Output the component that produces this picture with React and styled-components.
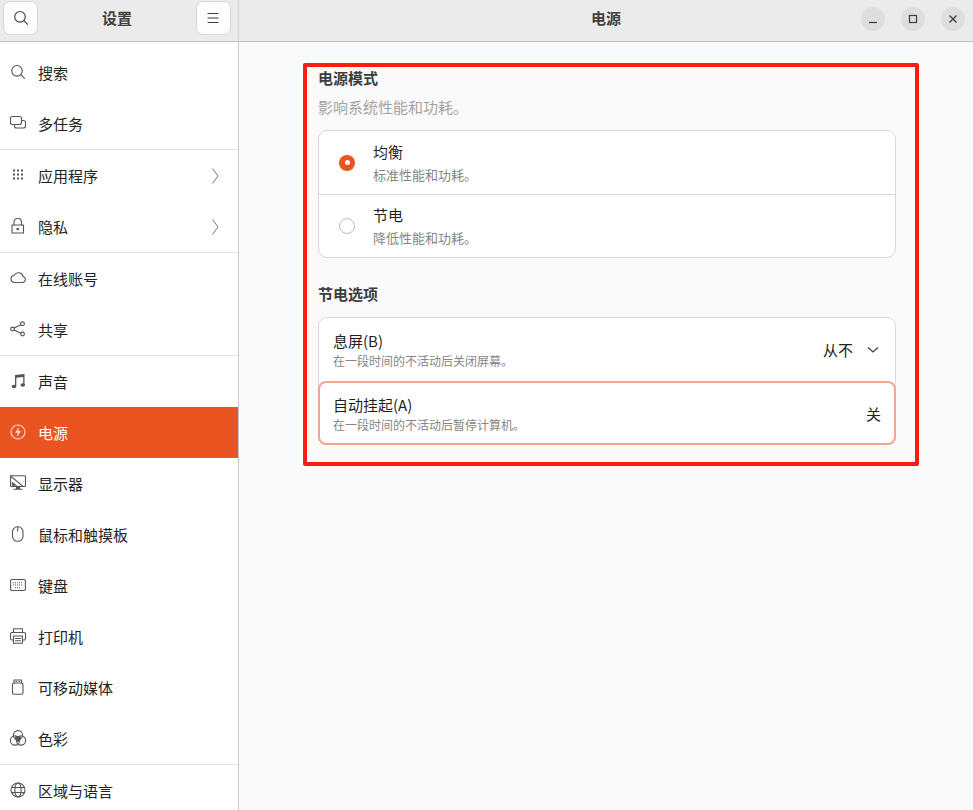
import React from 'react';
import styled, { createGlobalStyle } from 'styled-components';

const GlobalStyle = createGlobalStyle`
  html, body {
    margin: 0;
    padding: 0;
    height: 100%;
    overflow: hidden;
    background: #fafafa;
  }
  body {
    font-family: "Noto Sans CJK SC", "Noto Sans", sans-serif;
    color: #222222;
  }
`;

const Window = styled.div`
  width: 973px;
  height: 810px;
  display: grid;
  grid-template-columns: 239px 1fr;
  grid-template-rows: 42px 1fr;
  overflow: hidden;
`;

const SideHeader = styled.header`
  display: flex;
  align-items: flex-start;
  justify-content: space-between;
  box-sizing: border-box;
  padding: 1px 7px 0 3px;
  background: #ebebeb;
  border-bottom: 1px solid #c2c2c2;
  border-right: 1px solid #d2d2d2;
`;

const MainHeader = styled.header`
  display: flex;
  align-items: flex-start;
  justify-content: flex-end;
  position: relative;
  box-sizing: border-box;
  padding: 7px 8px 0 0;
  gap: 16px;
  background: #ebebeb;
  border-bottom: 1px solid #c2c2c2;
`;

const HeaderTitle = styled.h1`
  margin: 0;
  font-size: 15px;
  line-height: 34px;
  font-weight: 700;
  color: #404040;
`;

const MainTitle = styled(HeaderTitle)`
  position: absolute;
  left: 0;
  right: 0;
  top: 1px;
  text-align: center;
`;

const ToolButton = styled.button`
  width: 35px;
  height: 34px;
  padding: 0;
  display: flex;
  align-items: center;
  justify-content: center;
  background: #fdfdfd;
  border: 1px solid #d6d6d6;
  border-radius: 7px;
  color: #3d3d3d;
`;

const WindowButton = styled.button`
  position: relative;
  width: 24px;
  height: 24px;
  padding: 0;
  display: flex;
  align-items: center;
  justify-content: center;
  background: #dedede;
  border: none;
  border-radius: 50%;
  color: #3d3d3d;
`;

const Sidebar = styled.nav`
  box-sizing: border-box;
  height: 768px;
  padding-top: 5px;
  background: #ffffff;
  border-right: 1px solid #c9c9c9;
  overflow: hidden;
`;

const NavRow = styled.div`
  height: 51px;
  display: flex;
  align-items: center;
  box-sizing: border-box;
  padding: 0 19px 0 10px;
  font-size: 15px;
  background: ${p => (p.$active ? '#e95420' : 'transparent')};
  color: ${p => (p.$active ? '#ffffff' : '#222222')};
`;

const NavIcon = styled.span`
  width: 16px;
  height: 16px;
  margin: -2px 12px 0 0;
  display: flex;
  color: ${p => (p.$active ? '#ffd9cb' : '#555555')};
`;

const NavLabel = styled.span`
  flex: 1;
`;

const Separator = styled.div`
  height: 1px;
  background: #e3e3e3;
`;

const Main = styled.main`
  height: 768px;
  box-sizing: border-box;
  padding: 21px 0 0 64px;
  background: #fafafa;
`;

const Highlight = styled.section`
  box-sizing: border-box;
  width: 616px;
  height: 403px;
  padding: 0 20px 0 11px;
  border: 4px solid #fe1c10;
  border-radius: 2px;
`;

const SectionTitle = styled.h2`
  margin: ${p => p.$top || 0}px 0 0;
  font-size: 15px;
  line-height: 22px;
  font-weight: 700;
  color: #3d3d3d;
`;

const SectionHint = styled.p`
  margin: 7px 0 12px;
  font-size: 15px;
  line-height: 22px;
  color: #a3a3a3;
`;

const Card = styled.div`
  width: 578px;
  box-sizing: border-box;
  margin-top: ${p => p.$top || 0}px;
  background: #ffffff;
  border: 1px solid #d9d9d9;
  border-radius: 9px;
`;

const RadioRow = styled.div`
  height: 63px;
  display: flex;
  align-items: center;
  box-sizing: border-box;
  padding: 0 0 0 20px;
  border-top: ${p => (p.$first ? 'none' : '1px solid #d9d9d9')};
`;

const Radio = styled.span`
  width: 16px;
  height: 16px;
  margin-right: 18px;
  flex: none;
  box-sizing: border-box;
  border-radius: 50%;
  display: flex;
  align-items: center;
  justify-content: center;
  background: ${p => (p.$on ? '#e95420' : '#ffffff')};
  border: ${p => (p.$on ? 'none' : '1px solid #bcbcbc')};

  &::after {
    content: '';
    display: ${p => (p.$on ? 'block' : 'none')};
    width: 5px;
    height: 5px;
    border-radius: 50%;
    background: #ffffff;
  }
`;

const RowText = styled.div`
  display: flex;
  flex-direction: column;
  flex: 1;
`;

const RowTitle = styled.span`
  font-size: 15px;
  line-height: 22px;
  color: #1f1f1f;
`;

const RadioHint = styled.span`
  margin-top: 1px;
  font-size: 13px;
  line-height: 21px;
  color: #858585;
`;

const OptionRow = styled.div`
  height: ${p => (p.$focused ? 64 : 63)}px;
  display: flex;
  align-items: center;
  box-sizing: border-box;
  padding: 0 ${p => (p.$focused ? 13 : 16)}px 0 ${p => (p.$focused ? 13 : 14)}px;
  margin: ${p => (p.$focused ? '0 -1px -1px' : 0)};
  border: ${p => (p.$focused ? '2px solid #f3a68e' : 'none')};
  border-radius: ${p => (p.$focused ? '8px' : 0)};
`;

const OptionHint = styled.span`
  font-size: 12px;
  line-height: 17px;
  color: #858585;
`;

const OptionValue = styled.span`
  font-size: 15px;
  color: #222222;
`;

const ValueChevron = styled.span`
  display: flex;
  margin-left: 14px;
  color: #3d3d3d;
`;

const Svg = ({ children, size = 16 }) => (
  <svg
    width={size}
    height={size}
    viewBox="0 0 16 16"
    fill="none"
    stroke="currentColor"
    strokeWidth="1.1"
    strokeLinecap="round"
    strokeLinejoin="round"
  >
    {children}
  </svg>
);

const SearchIcon = () => (
  <Svg>
    <circle cx="7" cy="6.800" r="5.300" />
    <path d="M10.900 10.700l3.600 3.600" />
  </Svg>
);

const MenuIcon = () => (
  <Svg>
    <path d="M3 3.500h10M3 8h10M3 12.500h10" />
  </Svg>
);

const MultitaskIcon = () => (
  <Svg>
    <rect x="0.500" y="1.500" width="11" height="8" rx="2" />
    <path d="M11.500 5.500h2a2 2 0 0 1 2 2v3.500a2 2 0 0 1-2 2h-7a2 2 0 0 1-2-2v-1.500" />
  </Svg>
);

const AppsIcon = () => (
  <svg width="16" height="16" viewBox="0 0 16 16" fill="currentColor">
    {[2.500, 6.500, 10.500].map(y =>
      [3, 7, 11].map(x => <rect key={`${x}-${y}`} x={x} y={y} width="2" height="2" />)
    )}
  </svg>
);

const LockIcon = () => (
  <Svg>
    <rect x="2" y="7" width="11.500" height="8" />
    <path d="M4 7V4a3.700 3.700 0 0 1 7.500 0v3" />
    <circle cx="7.700" cy="11" r="0.800" fill="currentColor" />
  </Svg>
);

const CloudIcon = () => (
  <Svg>
    <path d="M4 12.500h8.500a3 3 0 0 0 .6-5.900A4.800 4.800 0 0 0 4.200 5.200 3.700 3.700 0 0 0 4 12.500z" />
  </Svg>
);

const ShareIcon = () => (
  <Svg>
    <circle cx="2.500" cy="8" r="1.900" />
    <circle cx="12.500" cy="2.800" r="1.900" />
    <circle cx="12.500" cy="13" r="1.900" />
    <path d="M4.200 7.100l6.600-3.400M4.200 8.900l6.600 3.300" />
  </Svg>
);

const MusicIcon = () => (
  <svg width="16" height="16" viewBox="0 0 16 16" fill="currentColor">
    <path d="M5 2L14.500 1v11h-1.300V4L6.300 4.800V13.500H5z" />
    <ellipse cx="4" cy="13.500" rx="2.300" ry="1.800" />
    <ellipse cx="12.800" cy="12" rx="2.300" ry="1.800" />
  </svg>
);

const PowerIcon = () => (
  <Svg>
    <circle cx="8" cy="8" r="7" />
    <path d="M9.300 2.500L5 8.800h2.700L6.800 13.500 11 7H8.300z" fill="currentColor" stroke="none" />
  </Svg>
);

const DisplayIcon = () => (
  <Svg>
    <rect x="0.500" y="0.800" width="15" height="10.700" rx="1" />
    <path d="M0.500 1L13 11.300" />
    <path d="M1.800 6.500l5.500 4.300H1.800z" fill="currentColor" stroke="none" />
    <path d="M6 12h4v1.700h2.500v1.100h-9v-1.100H6z" fill="currentColor" stroke="none" />
  </Svg>
);

const MouseIcon = () => (
  <Svg>
    <rect x="2.500" y="0.800" width="10.500" height="14.500" rx="5" />
    <path d="M7.700 1v4" />
  </Svg>
);

const KeyboardIcon = () => (
  <Svg>
    <rect x="0.600" y="2.500" width="14.800" height="11" rx="1.500" />
    <path d="M3 5.700h10M3 8h10M5 10.700h6" strokeDasharray="1 1" strokeLinecap="butt" />
  </Svg>
);

const PrinterIcon = () => (
  <Svg>
    <path d="M3.500 4.500V0.800h9v3.700" />
    <path d="M3.500 12H2a1.500 1.500 0 0 1-1.500-1.500V6A1.500 1.500 0 0 1 2 4.500h12A1.500 1.500 0 0 1 15.500 6v4.500A1.500 1.500 0 0 1 14 12h-1.500" />
    <rect x="3.500" y="8" width="9" height="7.200" />
    <path d="M5.500 10.500h5M5.500 12.700h5" />
  </Svg>
);

const UsbIcon = () => (
  <Svg>
    <rect x="2.500" y="4" width="10.500" height="11.300" rx="1.500" />
    <path d="M4 4V1h7.500v3M6 2.500h.6M9 2.500h.6" />
  </Svg>
);

const ColorIcon = () => (
  <Svg>
    <circle cx="8" cy="5.200" r="4.600" />
    <circle cx="5" cy="10.500" r="4.600" />
    <circle cx="11" cy="10.500" r="4.600" />
    <path d="M5 7C6.500 5.500 9.500 5.500 11 7c.3 2-1 4.500-3 5-2-.5-3.300-3-3-5z" fill="currentColor" stroke="none" />
  </Svg>
);

const GlobeIcon = () => (
  <Svg>
    <circle cx="8" cy="8" r="7" />
    <ellipse cx="8" cy="8" rx="3.200" ry="7" />
    <path d="M1.500 5.500h13M1.500 10.500h13" />
  </Svg>
);

const ChevronRight = () => (
  <svg width="7" height="16" viewBox="0 0 7 16" fill="none" stroke="#777777" strokeWidth="1">
    <path d="M.5 .5L6 8 .5 15.500" />
  </svg>
);

const ChevronDown = () => (
  <svg width="12" height="8" viewBox="0 0 12 8" fill="none" stroke="currentColor" strokeWidth="1.200">
    <path d="M1 1.500l5 4.500 5-4.500" />
  </svg>
);

const navGroups = [
  [
    { label: '搜索', icon: SearchIcon },
    { label: '多任务', icon: MultitaskIcon },
  ],
  [
    { label: '应用程序', icon: AppsIcon, more: true },
    { label: '隐私', icon: LockIcon, more: true },
  ],
  [
    { label: '在线账号', icon: CloudIcon },
    { label: '共享', icon: ShareIcon },
  ],
  [
    { label: '声音', icon: MusicIcon },
    { label: '电源', icon: PowerIcon, active: true },
    { label: '显示器', icon: DisplayIcon },
    { label: '鼠标和触摸板', icon: MouseIcon },
    { label: '键盘', icon: KeyboardIcon },
    { label: '打印机', icon: PrinterIcon },
    { label: '可移动媒体', icon: UsbIcon },
    { label: '色彩', icon: ColorIcon },
  ],
  [{ label: '区域与语言', icon: GlobeIcon }],
];

export default function App() {
  return (
    <Window>
      <GlobalStyle />

      <SideHeader>
        <ToolButton><SearchIcon /></ToolButton>
        <HeaderTitle>设置</HeaderTitle>
        <ToolButton><MenuIcon /></ToolButton>
      </SideHeader>

      <MainHeader>
        <MainTitle>电源</MainTitle>
        <WindowButton>
          <svg width="10" height="10" viewBox="0 0 10 10" stroke="currentColor" strokeWidth="1.200">
            <path d="M1 8.500h8" />
          </svg>
        </WindowButton>
        <WindowButton>
          <svg width="10" height="10" viewBox="0 0 10 10" fill="none" stroke="currentColor" strokeWidth="1.200">
            <rect x="1.500" y="1.500" width="7" height="7" />
          </svg>
        </WindowButton>
        <WindowButton>
          <svg width="10" height="10" viewBox="0 0 10 10" stroke="currentColor" strokeWidth="1.300">
            <path d="M1.500 1.500l7 7M8.500 1.500l-7 7" />
          </svg>
        </WindowButton>
      </MainHeader>

      <Sidebar>
        {navGroups.map((group, i) => (
          <React.Fragment key={i}>
            {i > 0 && <Separator />}
            {group.map(({ label, icon: Icon, more, active }) => (
              <NavRow key={label} $active={active}>
                <NavIcon $active={active}><Icon /></NavIcon>
                <NavLabel>{label}</NavLabel>
                {more && <ChevronRight />}
              </NavRow>
            ))}
          </React.Fragment>
        ))}
      </Sidebar>

      <Main>
        <Highlight>
          <SectionTitle>电源模式</SectionTitle>
          <SectionHint>影响系统性能和功耗。</SectionHint>
          <Card>
            <RadioRow $first>
              <Radio $on />
              <RowText>
                <RowTitle>均衡</RowTitle>
                <RadioHint>标准性能和功耗。</RadioHint>
              </RowText>
            </RadioRow>
            <RadioRow>
              <Radio />
              <RowText>
                <RowTitle>节电</RowTitle>
                <RadioHint>降低性能和功耗。</RadioHint>
              </RowText>
            </RadioRow>
          </Card>

          <SectionTitle $top={25}>节电选项</SectionTitle>
          <Card $top={12}>
            <OptionRow>
              <RowText>
                <RowTitle>息屏(B)</RowTitle>
                <OptionHint>在一段时间的不活动后关闭屏幕。</OptionHint>
              </RowText>
              <OptionValue>从不</OptionValue>
              <ValueChevron><ChevronDown /></ValueChevron>
            </OptionRow>
            <OptionRow $focused>
              <RowText>
                <RowTitle>自动挂起(A)</RowTitle>
                <OptionHint>在一段时间的不活动后暂停计算机。</OptionHint>
              </RowText>
              <OptionValue>关</OptionValue>
            </OptionRow>
          </Card>
        </Highlight>
      </Main>
    </Window>
  );
}
